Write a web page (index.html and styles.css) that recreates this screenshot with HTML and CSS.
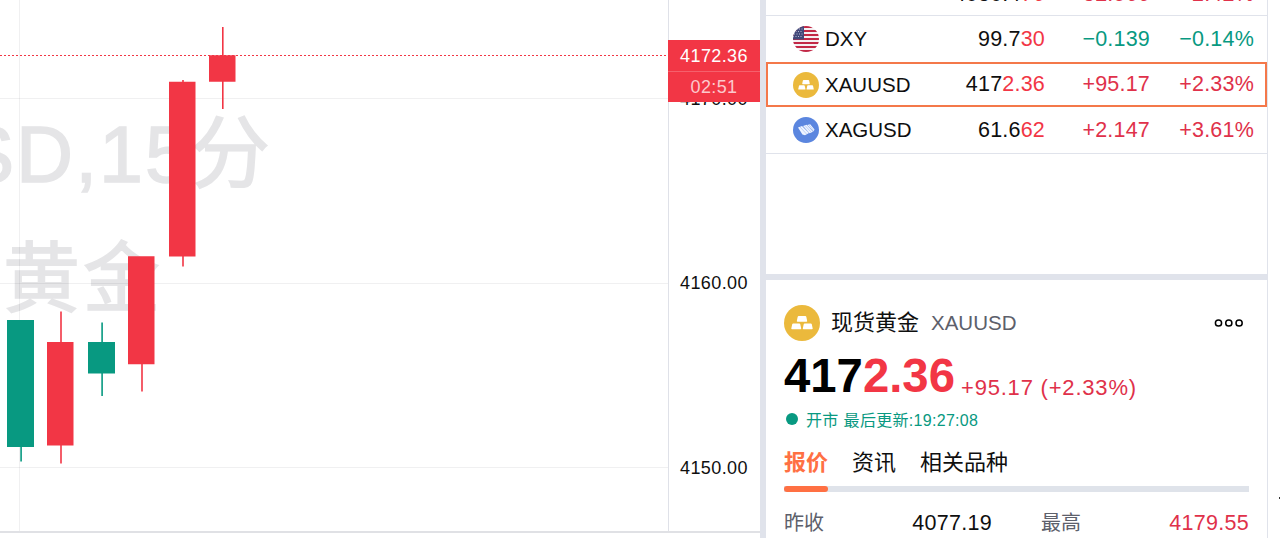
FILE: index.html
```
<!DOCTYPE html>
<html lang="zh-CN">
<head>
  <meta charset="UTF-8">
  <meta name="viewport" content="width=device-width, initial-scale=1.0">
  <title>XAUUSD 现货黄金</title>
  <link rel="stylesheet" href="styles.css">
</head>
<body>
  <svg class="symbols">
    <symbol id="gold" viewBox="0 0 36 36">
      <circle cx="18" cy="18" r="18" fill="#ebb93c"/>
      <path fill="#fff" d="M14.7 11h6.6q.8 0 1 .8l.9 4.2q.1.800-.7.800h-9q-.8 0-.7-.8l.9-4.200q.2-.8 1-.8zM9.200 18.500h6.100q.8 0 1 .8l.9 4.200q.1.800-.7.800H8q-.8 0-.7-.8l.9-4.200q.2-.8 1-.8zM20.700 18.500h6.100q.8 0 1 .8l.9 4.200q.1.800-.7.800h-8.500q-.8 0-.7-.8l.9-4.200q.2-.8 1-.8z"/>
    </symbol>
  </svg>

  <main class="terminal">
    <section class="chart">
      <div class="plot">
        <div class="watermark">
          <div class="mark-symbol">XAUUSD,15分</div>
          <div class="mark-name">现货黄金</div>
        </div>
        <svg class="candles" width="668" height="531" viewBox="0 0 668 531">
          <g stroke="#2a2e39" stroke-opacity=".07">
            <path d="M19.500 0V531M0 98.500H668M0 283.500H668M0 467.500H668"/>
          </g>
          <path d="M0 55.500H668" stroke="#f23645" stroke-dasharray="2 2"/>
          <g fill="#089981">
            <path d="M7 320h27v127H7zM20.300 447h1.600v14.500h-1.600z"/>
            <path d="M88 342h27v31.500H88zM101.300 322.500h1.600V396h-1.600z"/>
          </g>
          <g fill="#f23645">
            <path d="M47 342h26.500v103.500H47zM60.200 311.500h1.600v152h-1.600z"/>
            <path d="M128 256.300h26.500v108H128zM141.200 364h1.600v27.500h-1.600z"/>
            <path d="M169 81.700h26.500v174.800H169zM182.200 80h1.600v186.500h-1.600z"/>
            <path d="M209 55.200h26.500v26.500H209zM222 27h1.600v82H222z"/>
          </g>
        </svg>
      </div>
      <div class="scale">
        <span class="tick tick-4170">4170.00</span>
        <span class="tick tick-4160">4160.00</span>
        <span class="tick tick-4150">4150.00</span>
        <div class="last-price">
          <div>4172.36</div>
          <div class="countdown">02:51</div>
        </div>
      </div>
    </section>

    <aside class="sidebar">
      <div class="watchlist">
        <div class="row row-cut">
          <span class="dot"></span>
          <span class="name">NAS100</span>
          <span class="price">4080.4<b>76</b></span>
          <span class="change up">+82.566</span>
          <span class="percent up">+2.42%</span>
        </div>
        <div class="row">
          <svg class="icon" viewBox="0 0 26 26">
            <clipPath id="round"><circle cx="13" cy="13" r="13"/></clipPath>
            <g clip-path="url(#round)">
              <path fill="#f5f0f2" d="M0 0h26v26H0z"/>
              <path stroke="#c22846" stroke-width="2" d="M0 1h26M0 5h26M0 9h26M0 13h26M0 17h26M0 21h26M0 25h26"/>
              <path fill="#424879" d="M0 0h11v13.500H0z"/>
              <path stroke="#b9bdd5" stroke-dasharray="1 1.500" d="M1 3h10M0 5.500h10M1 8h10M0 10.500h10"/>
            </g>
          </svg>
          <span class="name">DXY</span>
          <span class="price">99.7<b>30</b></span>
          <span class="change down">−0.139</span>
          <span class="percent down">−0.14%</span>
        </div>
        <div class="row active">
          <svg class="icon"><use href="#gold"/></svg>
          <span class="name">XAUUSD</span>
          <span class="price">417<b>2.36</b></span>
          <span class="change up">+95.17</span>
          <span class="percent up">+2.33%</span>
        </div>
        <div class="row">
          <svg class="icon" viewBox="0 0 26 26">
            <circle cx="13" cy="13" r="13" fill="#5b86df"/>
            <path fill="#eef4ff" d="M5 10.500l4-1.500 7 7-4 2.300-2.600-.8zM10 9l3.600-1.300 6.400 7-3.500 1.600zM14.200 8l3-.8 4.300 5.300-1 2z"/>
            <path stroke="#9db8ef" stroke-width=".6" d="M7 10l6.500 7M12 8.500l6 6.500M16 7.800l4.500 5.600"/>
          </svg>
          <span class="name">XAGUSD</span>
          <span class="price">61.6<b>62</b></span>
          <span class="change up">+2.147</span>
          <span class="percent up">+3.61%</span>
        </div>
      </div>

      <div class="detail">
        <header class="title">
          <svg class="logo"><use href="#gold"/></svg>
          <h1>现货黄金</h1>
          <span class="code">XAUUSD</span>
          <svg class="more" width="30" height="10" viewBox="0 0 30 10">
            <g fill="none" stroke="#000" stroke-width="1.500">
              <circle cx="4.500" cy="5" r="3.100"/>
              <circle cx="14.800" cy="5" r="3.100"/>
              <circle cx="25.100" cy="5" r="3.100"/>
            </g>
          </svg>
        </header>
        <div class="quote">
          <strong>417<b>2.36</b></strong>
          <span class="diff">+95.17 (+2.33%)</span>
        </div>
        <div class="status">
          <i></i><span class="open">开市</span><span>最后更新:19:27:08</span>
        </div>
        <nav class="tabs">
          <a class="current">报价</a>
          <a>资讯</a>
          <a>相关品种</a>
        </nav>
        <div class="track"><div class="thumb"></div></div>
        <div class="stats">
          <span class="label">昨收</span>
          <span class="value">4077.19</span>
          <span class="label high">最高</span>
          <span class="value up">4179.55</span>
        </div>
      </div>
    </aside>
    <div class="gutter"></div>
  </main>
</body>
</html>
```
FILE: styles.css
```
* {
  box-sizing: border-box;
}
body {
  margin: 0;
  background: #fff;
  color: #0f0f0f;
  font-family: "Liberation Sans", Arial, "Noto Sans CJK SC", sans-serif;
  overflow: hidden;
}
b {
  font-weight: inherit;
  color: #f23645;
}
.symbols {
  position: absolute;
  width: 0;
  height: 0;
}
.terminal {
  display: flex;
  height: 538px;
}
.up {
  color: #e0314a;
}
.down {
  color: #089981;
}

/* chart */
.chart {
  display: flex;
  width: 760px;
  height: 533px;
  border-bottom: 2px solid #e0e1e5;
}
.plot {
  position: relative;
  width: 668px;
  overflow: hidden;
}
.candles {
  position: absolute;
  left: 0;
  top: 0;
}
.watermark {
  position: absolute;
  top: 0;
  right: 396px;
  color: #e5e5e7;
  font-size: 79px;
  letter-spacing: 2px;
  -webkit-text-stroke: 1.5px #e5e5e7;
  line-height: 124px;
  white-space: nowrap;
}
.mark-symbol {
  margin-top: 93px;
}
.mark-name {
  position: absolute;
  right: 109px;
  font-size: 77px;
  letter-spacing: 3px;
}
.scale {
  position: relative;
  width: 92px;
  border-left: 1px solid #dfe1e8;
  font-size: 18px;
  letter-spacing: 0.4px;
  line-height: 20px;
}
.tick {
  position: absolute;
  left: 11px;
}
.tick-4170 {
  top: 89px;
}
.tick-4160 {
  top: 273px;
}
.tick-4150 {
  top: 458px;
}
.last-price {
  position: absolute;
  top: 40px;
  left: -1px;
  right: 0;
  background: #f23645;
  color: #fff;
  text-align: center;
  line-height: 32px;
}
.last-price div {
  height: 31px;
}
.last-price .countdown {
  border-top: 1px solid #f5606c;
  color: #fcc8cc;
  line-height: 30px;
}

/* sidebar */
.sidebar {
  width: 508px;
  border-left: 6px solid #e0e3eb;
  border-right: 1px solid #e0e3eb;
  font-size: 21.5px;
}
.watchlist {
  height: 280px;
  border-bottom: 6px solid #e0e3eb;
  overflow: hidden;
}
.row {
  display: grid;
  grid-template-columns: 26px 93px 133px 105px 104px;
  align-items: center;
  height: 46px;
  padding-left: 27px;
}
.row:last-child {
  height: 47px;
  border-bottom: 1px solid #e0e3eb;
}
.row-cut {
  margin-top: -30px;
  border-bottom: 1px solid #e0e3eb;
}
.row-cut .price,
.row-cut .change,
.row-cut .percent {
  padding-top: 4px;
}
.active {
  border: 2px solid #f4784a;
  height: 45px;
  padding-left: 25px;
}
.icon {
  width: 26px;
  height: 26px;
}
.dot {
  width: 26px;
  height: 26px;
}
.name {
  padding-left: 6px;
  font-size: 20.5px;
}
.price,
.change,
.percent {
  text-align: right;
  letter-spacing: 0.2px;
}

/* symbol detail */
.detail {
  padding: 24px 18px 0 18px;
}
.title {
  display: flex;
  align-items: center;
  height: 37px;
}
.logo {
  width: 36px;
  height: 36px;
}
h1 {
  margin: 0 0 0 11px;
  font-size: 22px;
  font-weight: 400;
  line-height: 36px;
}
.code {
  margin-left: 12px;
  color: #5d606b;
  font-size: 20.5px;
}
.more {
  margin-left: auto;
  margin-right: 5px;
}
.quote {
  display: flex;
  height: 63px;
  line-height: 69px;
}
.quote strong {
  font-size: 47.3px;
  font-weight: 700;
  color: #000;
}
.diff {
  margin-left: 6px;
  padding-top: 12px;
  color: #e0314a;
  font-size: 22px;
  letter-spacing: 0.8px;
}
.status {
  display: flex;
  align-items: center;
  height: 30px;
  color: #089981;
  font-size: 16px;
  letter-spacing: 0.3px;
}
.status i {
  width: 12px;
  height: 12px;
  margin: 0 8px 0 2px;
  border-radius: 50%;
  background: #089981;
}
.open {
  margin-right: 5px;
}
.tabs {
  display: flex;
  gap: 24px;
  height: 52px;
  font-size: 22px;
  line-height: 58px;
}
.current {
  color: #ff7043;
  font-weight: 700;
}
.track {
  height: 6px;
  background: #dfe3ea;
}
.thumb {
  width: 44px;
  height: 6px;
  border-radius: 3px;
  background: #ff7043;
}
.stats {
  display: grid;
  grid-template-columns: 80px 128px 1fr 1fr;
  line-height: 62px;
}
.label {
  color: #5d606b;
  font-size: 20px;
}
.value {
  text-align: right;
  letter-spacing: 0.3px;
}
.high {
  padding-left: 49px;
}
.gutter {
  width: 12px;
  padding: 497px 0 0 11px;
}
.gutter::after {
  content: "";
  display: block;
  width: 1px;
  height: 2px;
  background: #333;
}
```
